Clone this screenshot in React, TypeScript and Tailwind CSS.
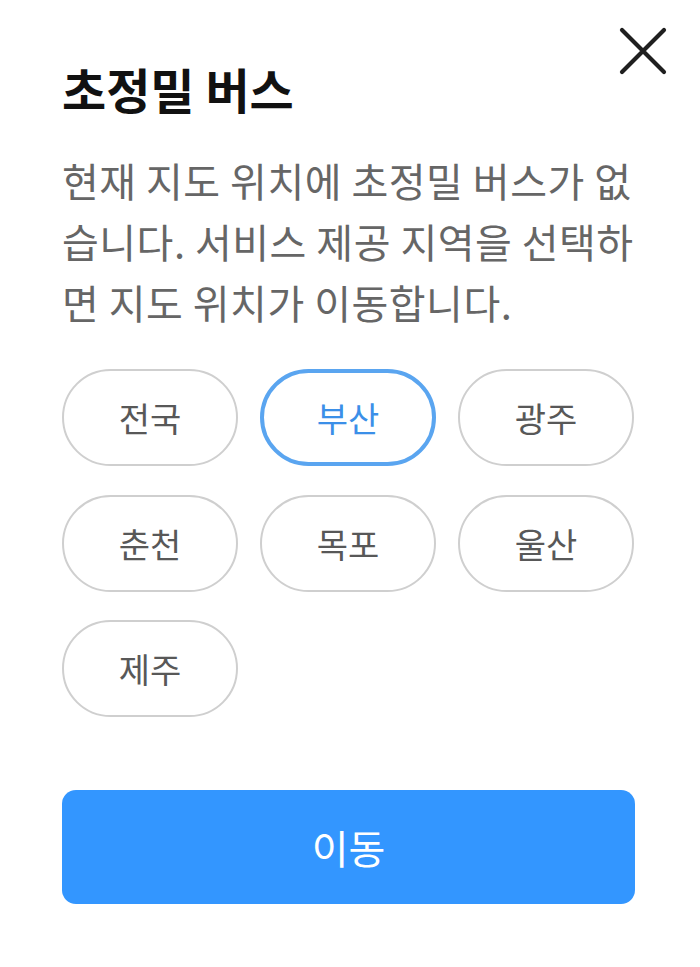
import React, { useState } from "react";

const regions = ["전국", "부산", "광주", "춘천", "목포", "울산", "제주"];

export default function App() {
  const [selected, setSelected] = useState("부산");
  return (
    <div
      className="relative w-[700px] h-[967px] bg-white"
      style={{ fontFamily: '"Noto Sans CJK KR", "Noto Sans", sans-serif' }}
    >
      <button className="absolute right-[32px] top-[26px] w-[50px] h-[50px] flex items-center justify-center">
        <svg width="50" height="50" viewBox="0 0 50 50" fill="none">
          <path d="M4 4L46 46M46 4L4 46" stroke="#1f1f1f" strokeWidth="4.2" strokeLinecap="round" />
        </svg>
      </button>
      <div className="px-[62px] pt-[58px]">
        <h1 className="text-[48px] leading-[60px] font-bold text-[#111]">초정밀 버스</h1>
        <p className="mt-[32px] w-[580px] text-[40px] leading-[61px] tracking-[0.5px] text-[#666] break-all">
          현재 지도 위치에 초정밀 버스가 없습니다. 서비스 제공 지역을 선택하면 지도 위치가 이동합니다.
        </p>
        <div className="mt-[36px] grid grid-cols-3 gap-x-[22px] gap-y-[28.5px] w-[572px]">
          {regions.map((r) => {
            const active = r === selected;
            return (
              <button
                key={r}
                onClick={() => setSelected(r)}
                className={
                  active
                    ? "h-[97px] rounded-full border-[4px] border-[#5aa5f0] text-[#3b8fe8] text-[34px] flex items-center justify-center"
                    : "h-[97px] rounded-full border-[2px] border-[#cfcfcf] text-[#585858] text-[34px] flex items-center justify-center"
                }
              >
                {r}
              </button>
            );
          })}
        </div>
        <button className="mt-[73px] w-[573px] h-[114px] rounded-[14px] bg-[#3396ff] text-white text-[40px] flex items-center justify-center">
          이동
        </button>
      </div>
    </div>
  );
}
